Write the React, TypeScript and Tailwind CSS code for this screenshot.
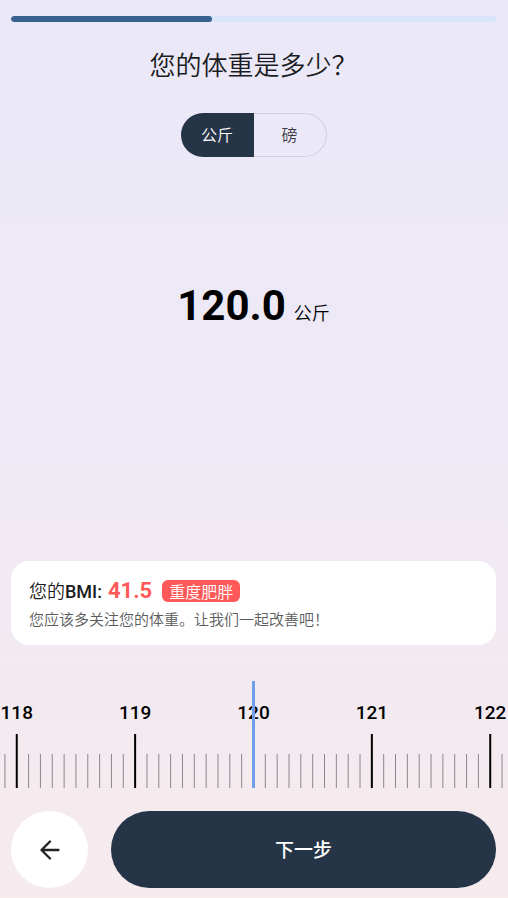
import * as React from "react";

type Unit = "kg" | "lb";

const MIN = 30;
const MAX = 200;

// distance between two whole numbers on the ruler, in % of its width
const STEP = 23.3;

const fontBase = "font-['Roboto','Noto_Sans_CJK_SC',sans-serif]";
const fontText = "font-['Noto_Sans_CJK_SC_DemiLight','Noto_Sans_CJK_SC',sans-serif] font-[350]";

function Progress({ value }: { value: number }) {
    return (
        <div
            role="progressbar"
            aria-label="进度"
            aria-valuenow={value}
            aria-valuemin={0}
            aria-valuemax={100}
            className="h-1.5 overflow-hidden rounded-full bg-[#d7e4fa]"
        >
            <div className="h-full rounded-full bg-[#39618f]" style={{ width: `${value}%` }} />
        </div>
    );
}

function UnitToggle({ value, onChange }: { value: Unit; onChange: (next: Unit) => void }) {
    const base = "w-[73px] cursor-pointer pb-0.5 text-base";
    const active = "bg-[#253447] text-white";
    const idle = "border border-l-0 border-[#d3d0df] text-[#3c3c46]";

    return (
        <div className={[fontText, "flex h-11 self-center"].join(" ")}>
            <button
                type="button"
                aria-pressed={value === "kg"}
                className={[base, "rounded-l-full", value === "kg" ? active : idle].join(" ")}
                onClick={() => onChange("kg")}
            >
                公斤
            </button>
            <button
                type="button"
                aria-pressed={value === "lb"}
                className={[base, "rounded-r-full", value === "lb" ? active : idle].join(" ")}
                onClick={() => onChange("lb")}
            >
                磅
            </button>
        </div>
    );
}

function Ruler({ value, onChange }: { value: number; onChange: (next: number) => void }) {
    const center = Math.round(value * 10);
    const ticks = Array.from({ length: 45 }, (_, i) => center - 22 + i);

    return (
        <div className="relative h-[107px] overflow-hidden">
            <svg className="h-full w-full" aria-hidden="true">
                {ticks.map((t) => {
                    const x = `${49.9 + ((t - center) / 10) * STEP}%`;
                    if (t % 10 !== 0) {
                        return <line key={t} x1={x} x2={x} y1={73} y2={107} stroke="#8a878c" />;
                    }
                    return (
                        <g key={t}>
                            <line x1={x} x2={x} y1={53} y2={107} stroke="#000" strokeWidth={2} />
                            <text x={x} y={38} textAnchor="middle" className="fill-black text-[19px] font-medium">
                                {t / 10}
                            </text>
                        </g>
                    );
                })}
                <line x1="49.9%" x2="49.9%" y1={0} y2={107} stroke="#6f9fe8" strokeWidth={3} />
            </svg>
            <input
                type="range"
                aria-label="体重"
                min={MIN}
                max={MAX}
                step={0.1}
                value={value}
                onChange={(e) => onChange(Number(e.target.value))}
                className="absolute inset-0 h-full w-full cursor-pointer opacity-0"
            />
        </div>
    );
}

export default function App() {
    const [unit, setUnit] = React.useState<Unit>("kg");
    const [weight, setWeight] = React.useState(120);

    return (
        <main
            className={[
                fontBase,
                "flex min-h-screen flex-col pt-4 pr-3 pb-2.5 pl-[11px]",
                "bg-linear-to-b from-[#eae8f8] via-[#efe9f5] to-[#f6ebed]",
            ].join(" ")}
        >
            <Progress value={41.5} />

            <h1 className={[fontText, "mt-6 text-center text-[26px] leading-9 text-[#1b1b22]"].join(" ")}>
                您的体重是多少？
            </h1>

            <div className="mt-[31px] flex flex-col">
                <UnitToggle value={unit} onChange={setUnit} />
            </div>

            <div className="mt-[125px] flex items-baseline justify-center gap-2 text-black">
                <span className="text-[42px] leading-[48px] font-bold">{weight.toFixed(1)}</span>
                <span className={[fontText, "text-lg leading-6"].join(" ")}>{unit === "kg" ? "公斤" : "磅"}</span>
            </div>

            {/* BMI */}
            <section className="mt-auto rounded-[18px] bg-white px-[18px] pt-[18px] pb-4">
                <div className="flex h-6 items-center text-lg leading-6 text-[#1b1b22]">
                    <span className="font-medium">
                        <span className={fontText}>您的</span>BMI:
                    </span>
                    <span className="ml-1.5 text-[22px] font-bold text-[#ff5a59]">41.5</span>
                    <span
                        className={[
                            fontText,
                            "ml-2.5 rounded-md bg-[#ff5a59] px-[7px] text-base leading-[22px] text-white",
                        ].join(" ")}
                    >
                        重度肥胖
                    </span>
                </div>
                <p className={[fontText, "mt-1.5 text-[15px] leading-5 text-[#5c5c5c]"].join(" ")}>
                    您应该多关注您的体重。让我们一起改善吧！
                </p>
            </section>

            {/* runs to both window edges */}
            <div className="mt-9 -mr-3 -ml-[11px]">
                <Ruler value={weight} onChange={setWeight} />
            </div>

            <div className="mt-[23px] flex gap-[23px]">
                <button
                    type="button"
                    aria-label="返回"
                    className="flex size-[77px] shrink-0 cursor-pointer items-center justify-center rounded-full bg-white"
                >
                    <svg
                        width="20"
                        height="20"
                        viewBox="0 0 20 20"
                        fill="none"
                        stroke="#222"
                        strokeWidth="2.300"
                        strokeLinecap="round"
                        strokeLinejoin="round"
                    >
                        <path d="M18.500 10H1.500M10 1.500L1.500 10L10 18.500" />
                    </svg>
                </button>
                <button
                    type="button"
                    className="flex-1 cursor-pointer rounded-full bg-[#253447] pt-1 text-[19px] font-medium text-white"
                >
                    下一步
                </button>
            </div>
        </main>
    );
}
